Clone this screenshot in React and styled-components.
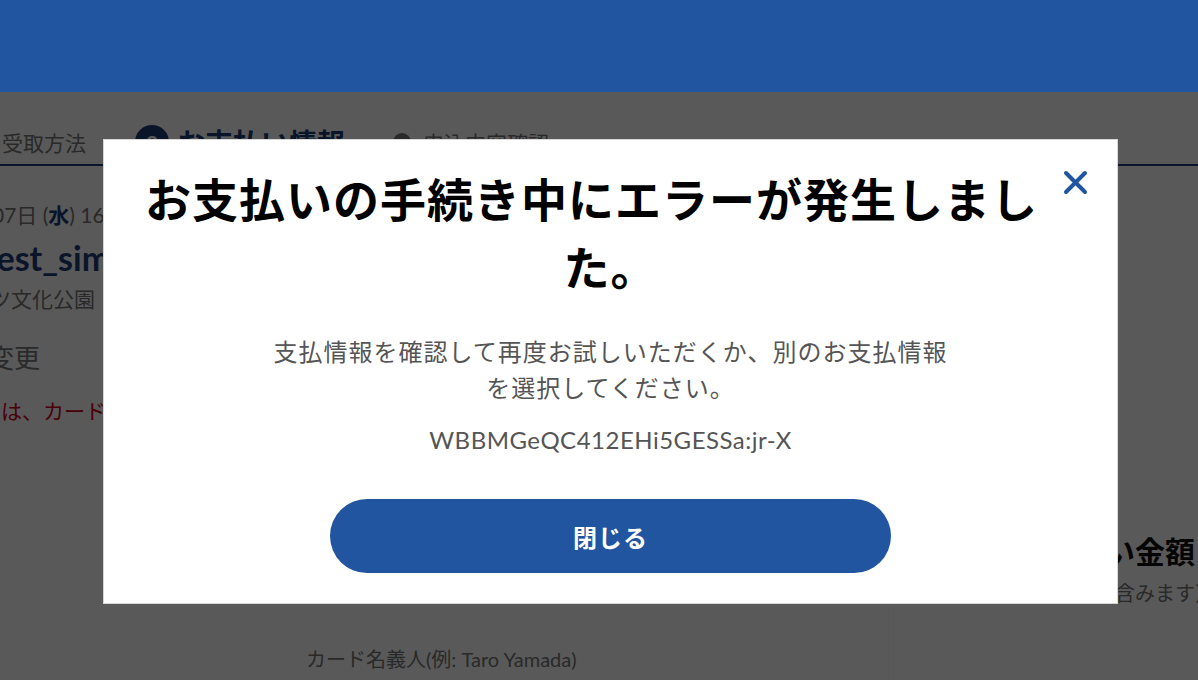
import React from 'react';
import styled, { createGlobalStyle } from 'styled-components';

const GlobalStyle = createGlobalStyle`
  html, body {
    margin: 0;
    padding: 0;
    overflow: hidden;
    background: #fff;
  }
  body {
    font-family: Lato, "Noto Sans CJK JP", "Noto Sans", sans-serif;
    color: #333;
  }
`;

const Page = styled.div`
  width: 1198px;
  height: 680px;
  overflow: hidden;
  display: flex;
  flex-direction: column;
`;

const Header = styled.header`
  height: 92px;
  flex-shrink: 0;
  background: #2155a0;
  position: relative;
  z-index: 20;
`;

const Stepper = styled.nav`
  height: 74px;
  flex-shrink: 0;
  display: flex;
  align-items: center;
  border-bottom: 2px solid #1d3c78;
  padding-left: 2px;
  padding-top: 28px;
  box-sizing: border-box;
`;

const Step = styled.div`
  display: flex;
  align-items: center;
  gap: 8px;
  margin-right: ${(p) => p.$gap || 0}px;
  color: ${(p) => (p.$active ? '#1d3c78' : '#777')};
  font-size: ${(p) => (p.$active ? 28 : 21)}px;
  font-weight: ${(p) => (p.$active ? 700 : 400)};
  white-space: nowrap;
`;

const StepDot = styled.span`
  width: ${(p) => p.$size}px;
  height: ${(p) => p.$size}px;
  border-radius: 50%;
  background: ${(p) => p.$color};
  color: #fff;
  font-size: 21px;
  font-weight: 700;
  display: flex;
  align-items: center;
  justify-content: center;
  margin-right: ${(p) => p.$space || 0}px;
`;

const Main = styled.main`
  flex: 1;
  display: grid;
  grid-template-columns: 893px 1fr;
`;

const Left = styled.section`
  padding-top: 35px;
  display: flex;
  flex-direction: column;
`;

const Line = styled.div`
  font-size: ${(p) => p.$size}px;
  line-height: ${(p) => p.$lh}px;
  font-weight: ${(p) => p.$weight || 400};
  color: ${(p) => p.$color || '#777'};
  margin-top: ${(p) => p.$top || 0}px;
  margin-left: ${(p) => p.$left || 0}px;
  white-space: nowrap;

  b {
    color: #1d3c78;
  }
`;

const Summary = styled.aside`
  border-left: 1px solid #f8f8f8;
  padding-top: 366px;
  padding-left: 121px;
`;

const Overlay = styled.div`
  position: fixed;
  top: 92px;
  left: 0;
  right: 0;
  bottom: 0;
  background: rgba(0, 0, 0, 0.65);
  z-index: 10;
  display: flex;
  align-items: flex-start;
  padding: 47px 0 0 103px;
`;

const Modal = styled.div`
  position: relative;
  width: 1015px;
  height: 465px;
  box-sizing: border-box;
  background: #fff;
  border: 1px solid #d6d6d6;
  padding: 26px 40px 0;
  display: flex;
  flex-direction: column;
  align-items: center;
  text-align: center;
`;

const Close = styled.button`
  position: absolute;
  top: 30px;
  right: 29px;
  width: 25px;
  height: 25px;
  padding: 0;
  border: 0;
  background: none;
  cursor: pointer;
  display: flex;
`;

const Title = styled.h2`
  margin: 0;
  text-indent: -38px;
  font-size: 46px;
  line-height: 68px;
  letter-spacing: 1px;
  font-weight: 700;
  color: #000;
`;

const Message = styled.p`
  margin: 32px 0 0;
  max-width: 684px;
  font-size: 24px;
  line-height: 36px;
  letter-spacing: 1px;
  color: #555;
`;

const Code = styled(Message)`
  margin-top: 16px;
  letter-spacing: 0.5px;
`;

const CloseButton = styled.button`
  margin-top: 41px;
  width: 561px;
  height: 74px;
  border: 0;
  border-radius: 37px;
  background: #2155a0;
  color: #fff;
  font-family: inherit;
  font-size: 24px;
  font-weight: 700;
  letter-spacing: 1px;
  cursor: pointer;
`;

export default function App() {
  return (
    <>
      <GlobalStyle />
      <Page>
        <Header />
        <Stepper>
          <Step $gap={49}>受取方法</Step>
          <Step $active $gap={48}>
            <StepDot $size={34} $color="#1d3c78">2</StepDot>
            お支払い情報
          </Step>
          <Step>
            <StepDot $size={18} $color="#777" $space={4} />
            申込内容確認
          </Step>
        </Stepper>
        <Main>
          <Left>
            <Line $size={21} $lh={28} $left={-8}>
              07日 (<b>水</b>) 16:00
            </Line>
            <Line $size={34} $lh={42} $top={8} $left={-16} $weight={700} $color="#1d3c78">
              test_simulation
            </Line>
            <Line $size={21} $lh={28} $top={6} $left={-10}>
              ツ文化公園
            </Line>
            <Line $size={26} $lh={36} $top={27} $left={-12}>
              変更
            </Line>
            <Line $size={21} $lh={28} $top={21} $left={1} $color="#d0021b">
              は、カード情報を再度ご入力ください。
            </Line>
            <Line $size={20} $lh={26} $top={221} $left={306}>
              カード名義人(例: Taro Yamada)
            </Line>
          </Left>
          <Summary>
            <Line $size={30} $lh={38} $weight={700} $color="#111">
              お支払い金額
            </Line>
            <Line $size={20} $lh={26} $top={10}>
              （手数料を含みます）
            </Line>
          </Summary>
        </Main>
      </Page>
      <Overlay>
        <Modal role="dialog">
          <Close aria-label="閉じる">
            <svg viewBox="0 0 25 25" width="25" height="25">
              <path d="M3 3 L22 22 M22 3 L3 22" stroke="#2155a0" strokeWidth="4" strokeLinecap="round" fill="none" />
            </svg>
          </Close>
          <Title>お支払いの手続き中にエラーが発生しました。</Title>
          <Message>支払情報を確認して再度お試しいただくか、別のお支払情報を選択してください。</Message>
          <Code as="p">WBBMGeQC412EHi5GESSa:jr-X</Code>
          <CloseButton>閉じる</CloseButton>
        </Modal>
      </Overlay>
    </>
  );
}
